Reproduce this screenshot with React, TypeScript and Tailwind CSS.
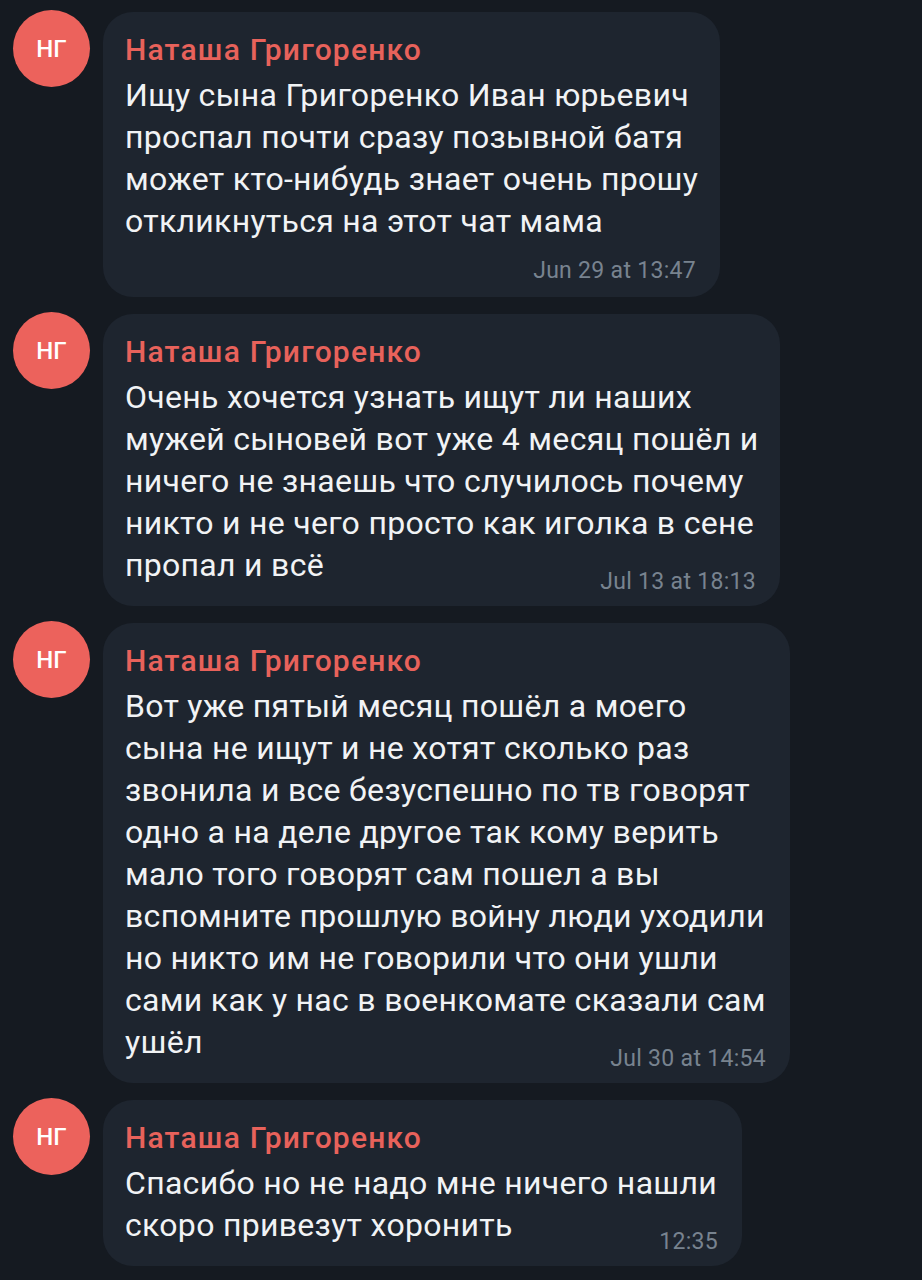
const messages = [
  {
    lines: [
      "Ищу сына Григоренко Иван юрьевич",
      "проспал почти сразу позывной батя",
      "может кто-нибудь знает очень прошу",
      "откликнуться на этот чат мама",
    ],
    time: "Jun 29 at 13:47",
    timeOwnLine: true,
    width: "w-[617px]",
  },
  {
    lines: [
      "Очень хочется узнать ищут ли наших",
      "мужей сыновей вот уже 4 месяц пошёл и",
      "ничего не знаешь что случилось почему",
      "никто и не чего просто как иголка в сене",
      "пропал и всё",
    ],
    time: "Jul 13 at 18:13",
    timeOwnLine: false,
    width: "w-[677px]",
  },
  {
    lines: [
      "Вот уже пятый месяц пошёл а моего",
      "сына не ищут и не хотят сколько раз",
      "звонила и все безуспешно по тв говорят",
      "одно а на деле другое так кому верить",
      "мало того говорят сам пошел а вы",
      "вспомните прошлую войну люди уходили",
      "но никто им не говорили что они ушли",
      "сами как у нас в военкомате сказали сам",
      "ушёл",
    ],
    time: "Jul 30 at 14:54",
    timeOwnLine: false,
    width: "w-[687px]",
  },
  {
    lines: ["Спасибо но не надо мне ничего нашли", "скоро привезут хоронить"],
    time: "12:35",
    timeOwnLine: false,
    width: "w-[639px]",
  },
];

function Avatar() {
  return (
    <div className="w-[77px] h-[77px] shrink-0 rounded-full bg-[#ec625c] flex items-center justify-center text-white text-[24px] font-medium -mt-[2px]">
      НГ
    </div>
  );
}

function Bubble({ msg }: { msg: (typeof messages)[number] }) {
  const last = msg.lines.length - 1;
  return (
    <div
      className={`${msg.width} rounded-[30px] bg-[#1e252f] pl-[22px] pr-[24px] pt-[17px] ${
        msg.timeOwnLine ? "pb-[14px]" : "pb-[20px]"
      }`}
    >
      <div className="text-[30px] leading-[42px] font-medium tracking-[1.2px] text-[#e8625b]">
        Наташа Григоренко
      </div>
      <div className="mt-[3px] text-[32px] leading-[42px] tracking-[0.3px] text-[#f1f3f5]">
        {msg.lines.map((line, i) =>
          i === last && !msg.timeOwnLine ? (
            <div key={i} className="flex items-end justify-between">
              <span className="whitespace-nowrap">{line}</span>
              <span className="text-[23px] leading-[22px] tracking-[0.3px] text-[#78838f] translate-y-[7px]">
                {msg.time}
              </span>
            </div>
          ) : (
            <div key={i} className="whitespace-nowrap">
              {line}
            </div>
          )
        )}
      </div>
      {msg.timeOwnLine && (
        <div className="mt-[17px] text-right text-[23px] leading-[24px] tracking-[0.3px] text-[#78838f]">
          {msg.time}
        </div>
      )}
    </div>
  );
}

export default function App() {
  return (
    <div
      className="min-h-screen bg-[#151a21] pt-[12px] pl-[13px] flex flex-col gap-[17px]"
      style={{ fontFamily: "Roboto, 'Noto Sans', sans-serif" }}
    >
      {messages.map((msg, i) => (
        <div key={i} className="flex items-start gap-[13px]">
          <Avatar />
          <Bubble msg={msg} />
        </div>
      ))}
    </div>
  );
}
